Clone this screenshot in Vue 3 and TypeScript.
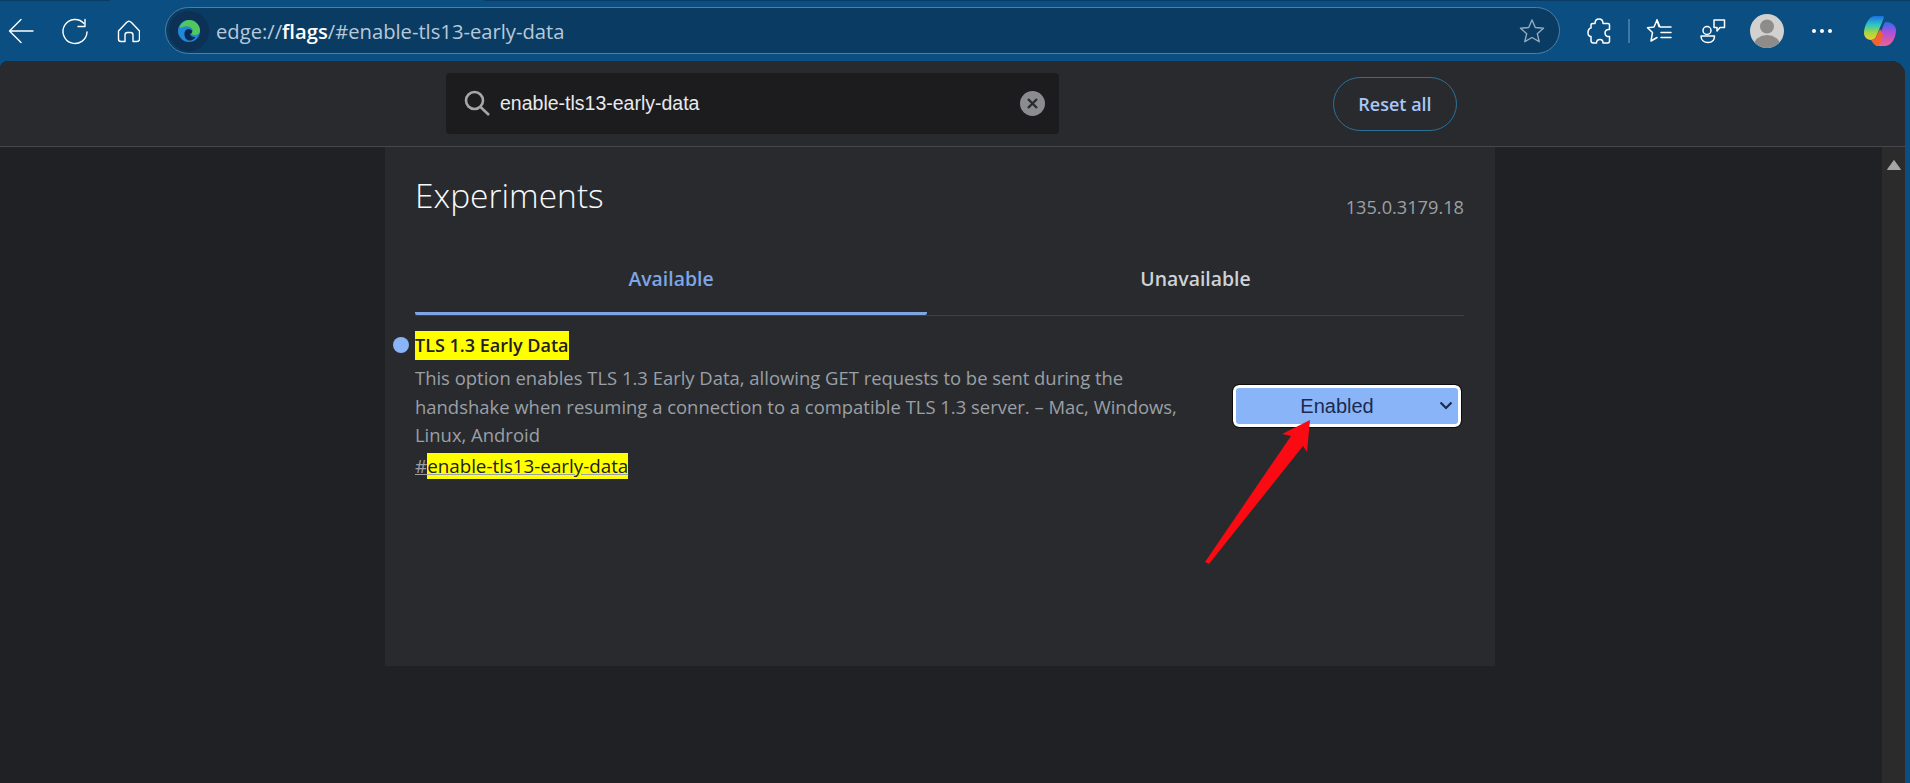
<template>
  <div class="browser">
    <header class="toolbar">
      <div class="nav-icons">
        <svg width="140" height="44" viewBox="0 0 140 44" fill="none" stroke="#fff" stroke-width="1.4" stroke-linecap="round" stroke-linejoin="round">
          <path d="M9.5 22H33M21 10.5 9.5 22 21 33.5"/>
          <path d="M84 14.5A12 12 0 1 0 87 23"/>
          <path d="M85 10.5V17.5H78"/>
          <path d="M118.5 22 126.5 13.5Q129 11 131.5 13.5L139.5 22V30Q139.5 32.5 137 32.5H133V26Q133 23.5 130.5 23.5H127.5Q125 23.5 125 26V32.5H121Q118.5 32.5 118.5 30Z"/>
        </svg>
      </div>
      <div class="omnibox">
        <span class="site-badge">
          <svg width="24" height="24" viewBox="0 0 24 24">
            <circle cx="12" cy="12" r="11" fill="#1f88d9"/>
            <path d="M2.5 8C5 2.5 10 1 12 1c6 0 11 5 11 10.5 0 3-2.5 4.5-5 4.5-2 0-4-1-4.5-2 2-.5 2.5-2 2-3.5C14.5 8 11 6.5 7.5 7.5 5.5 8 3.5 9.5 2.5 8z" fill="#52c75c"/>
            <path d="M9 11c2-2 5-1 6 .5.5 1.5 0 3-2 3.5.5 2 3 3.500 5.5 3-2 3-5 4-7 3.5-4-1-5.5-8-2.5-10.500z" fill="#0b2a4e"/>
          </svg>
        </span>
        <span class="url">edge://<b>flags</b>/#enable-tls13-early-data</span>
        <svg class="fav" width="26" height="26" viewBox="0 0 26 26" fill="none" stroke="#93abc0" stroke-width="1.4" stroke-linejoin="round">
          <path d="M13 2 16.3 9.5 24.5 10.3 18.3 15.7 20.2 23.7 13 19.5 5.8 23.7 7.7 15.7 1.5 10.3 9.7 9.5Z"/>
        </svg>
      </div>
      <div class="tools">
        <svg width="24" height="26" viewBox="0 0 24 26" fill="none" stroke="#fff" stroke-width="1.5" stroke-linejoin="round">
          <path d="M8 5.5C8 3 9.5 1 12 1s4 2 4 4.5H21C22 5.5 22.5 6 22.5 7V11.5C20 11 18 12.5 18 15s2 4 4.5 3.500V23c0 1-.5 2-2 2H16C16 22.5 14.5 21.5 13 21.5S9.5 22.5 9.5 25H6.5C5 25 4 24 4 22.5V18.5C1.5 18.5 1 16 1 14.5S2 10 4 10V7C4 6 5 5.5 6 5.5Z"/>
        </svg>
        <span class="divider"></span>
        <svg width="26" height="26" viewBox="0 0 26 26" fill="none" stroke="#fff" stroke-width="1.5" stroke-linejoin="round" stroke-linecap="round">
          <path d="M13 8.5 11 2 8 9 1.5 9.8 6.5 14.5 5 23 11 19.5"/>
          <path d="M11 2 14 9H25M15 14.5H25M15 19.5H25"/>
        </svg>
        <svg class="collab" width="26" height="26" viewBox="0 0 26 26" fill="none" stroke="#fff" stroke-width="1.5" stroke-linejoin="round">
          <circle cx="7" cy="12.5" r="4"/>
          <path d="M1 18H14.5C14.5 22 12 24.5 8 24.5S1 22 1 18Z"/>
          <path d="M14 2H24.5V9.5H20L17 13V9.5H14Z"/>
        </svg>
        <svg class="avatar" width="34" height="34" viewBox="0 0 34 34">
          <defs><clipPath id="av"><circle cx="17" cy="17" r="17"/></clipPath></defs>
          <circle cx="17" cy="17" r="17" fill="#d3d1cf"/>
          <circle cx="17" cy="12.5" r="7" fill="#8e8c8a"/>
          <ellipse cx="17" cy="31" rx="13" ry="10" fill="#8e8c8a" clip-path="url(#av)"/>
        </svg>
        <span class="dots"><i></i><i></i><i></i></span>
        <svg class="copilot" width="34" height="32" viewBox="0 0 34 32">
          <defs>
            <linearGradient id="cpA" x1="0" y1="0" x2="0" y2="1">
              <stop offset="0" stop-color="#1d6fe0"/>
              <stop offset=".35" stop-color="#2bc2c8"/>
              <stop offset=".7" stop-color="#a5d83f"/>
              <stop offset="1" stop-color="#f7c72f"/>
            </linearGradient>
            <linearGradient id="cpB" x1="0" y1="0" x2="0" y2="1">
              <stop offset="0" stop-color="#2a6fe6"/>
              <stop offset=".4" stop-color="#a94fe0"/>
              <stop offset="1" stop-color="#f2608f"/>
            </linearGradient>
          </defs>
          <path d="M11 1H20C21 1 21 3 20 5L13 22C12 24 10 25 8 25 4 25 1 22 1 18 1 12 5 2 11 1Z" fill="url(#cpA)"/>
          <path d="M23 7C29 7 33 11 33 15 33 22 29 31 22 31H14C12 31 13 29 14 27L21 9C21.5 8 22 7 23 7Z" fill="url(#cpB)"/>
          <path d="M8 25C10 25 12 24 13 22L17 14 20 20C19 26 16 31 14 31 11 30 10 28 8 25Z" fill="#f2622e"/>
        </svg>
      </div>
    </header>

    <div class="window">
      <div class="search-bar">
        <div class="search-box">
          <svg width="28" height="26" viewBox="0 0 28 26" fill="none" stroke="#a4a6a8" stroke-width="2.6">
            <circle cx="11.5" cy="10.5" r="8.5"/>
            <path d="M17.5 17 26 25"/>
          </svg>
          <span class="query">enable-tls13-early-data</span>
          <svg class="clear" width="25" height="25" viewBox="0 0 25 25">
            <circle cx="12.5" cy="12.5" r="12.5" fill="#8a8c8f"/>
            <path d="M8 8 17 17M17 8 8 17" stroke="#2a2b2e" stroke-width="2.4"/>
          </svg>
        </div>
        <button class="reset">Reset all</button>
      </div>

      <div class="page">
        <main class="scroller">
          <section class="panel">
            <div class="head">
              <h1>Experiments</h1>
              <span class="version">135.0.3179.18</span>
            </div>
            <div class="tabs">
              <div class="tab active">Available</div>
              <div class="tab">Unavailable</div>
            </div>
            <div class="flag">
              <span class="dot"></span>
              <div class="flag-text">
                <div class="flag-title"><mark>TLS 1.3 Early Data</mark></div>
                <p>This option enables TLS 1.3 Early Data, allowing GET requests to be sent during the handshake when resuming a connection to a compatible TLS 1.3 server. – Mac, Windows, Linux, Android</p>
                <a class="flag-link">#<mark>enable-tls13-early-data</mark></a>
              </div>
              <div class="select">
                <span>Enabled</span>
                <svg width="14" height="9" viewBox="0 0 14 9" fill="none" stroke="#1b2a4e" stroke-width="2.2">
                  <path d="M1.5 1.5 7 7 12.5 1.5"/>
                </svg>
              </div>
            </div>
          </section>
        </main>
        <aside class="scrollbar">
          <svg width="14" height="10" viewBox="0 0 14 10"><path d="M7 .5 13.5 9.5H.5Z" fill="#a6a6a6" stroke="#a6a6a6" stroke-linejoin="round"/></svg>
        </aside>
      </div>
    </div>

    <svg class="callout" width="120" height="160" viewBox="1200 412 120 160">
      <path d="M1310 420 1307 452 1303 446 1209 564 1205 562 1291 436 1282 434Z" fill="#fa0a12"/>
    </svg>
  </div>
</template>

<script setup lang="ts">
</script>

<style>
html, body {
  margin: 0;
  background: #0b4f82;
}
</style>

<style scoped>
.browser {
  position: relative;
  display: flex;
  flex-direction: column;
  width: 1910px;
  height: 783px;
  overflow: hidden;
  background: #0b4f82;
  font-family: "Open Sans", "Noto Sans", sans-serif;
}

.toolbar {
  flex: 0 0 61px;
  display: flex;
  align-items: center;
  height: 61px;
  box-sizing: border-box;
  padding-top: 1px;
  background: linear-gradient(to right, #0a3c66 110px, #0b4f82 110px, #0b4f82 484px, #0a3c66 484px) 0 0 / 100% 1px no-repeat;
}

.nav-icons {
  display: flex;
  width: 165px;
  flex: none;
}

.omnibox {
  flex: none;
  display: flex;
  align-items: center;
  width: 1395px;
  height: 47px;
  margin-top: -1px;
  box-sizing: border-box;
  border: 1px solid #4f7fa5;
  border-radius: 24px;
  background: #0a3c63;
  color: #b7c9d9;
}

.site-badge {
  display: flex;
  align-items: center;
  justify-content: center;
  width: 40px;
  height: 40px;
  margin-left: 3px;
  border-radius: 50%;
  background: #0c3154;
}

.url {
  margin-left: 7px;
  font-size: 20.2px;
}

.url b {
  color: #fff;
  font-weight: 600;
}

.fav {
  margin-left: auto;
  margin-right: 14px;
}

.tools {
  display: flex;
  align-items: center;
  flex: none;
  padding-left: 27px;
}

.divider {
  width: 2px;
  height: 24px;
  margin: 0 16px 0 17px;
  background: #3e79a6;
}

.collab {
  margin-left: 28px;
}

.avatar {
  margin-left: 24px;
}

.dots {
  display: flex;
  gap: 4px;
  margin-left: 28px;
}

.dots i {
  width: 4px;
  height: 4px;
  border-radius: 50%;
  background: #fff;
}

.copilot {
  margin-left: 31px;
}

.window {
  flex: 1;
  display: flex;
  flex-direction: column;
  min-height: 0;
  margin-right: 5px;
  border-radius: 8px 14px 0 0;
  overflow: hidden;
  background: #202124;
}

.search-bar {
  flex: 0 0 86px;
  display: flex;
  align-items: center;
  box-sizing: border-box;
  border-bottom: 1px solid #46474a;
  background: #292a2d;
}

.search-box {
  display: flex;
  align-items: center;
  width: 613px;
  height: 61px;
  margin-left: 446px;
  margin-top: -1px;
  box-sizing: border-box;
  padding: 0 14px 0 17px;
  border-radius: 4px;
  background: #1c1c1e;
}

.query {
  margin-left: 9px;
  font-family: "Liberation Sans", Arial, sans-serif;
  font-size: 19.5px;
  color: #e8eaed;
}

.clear {
  margin-left: auto;
}

.reset {
  width: 124px;
  height: 54px;
  margin-left: 274px;
  margin-top: 1px;
  padding: 0;
  border: 1px solid #2b7197;
  border-radius: 27px;
  background: transparent;
  color: #a8c7fa;
  font-family: inherit;
  font-size: 18px;
  font-weight: 600;
}

.page {
  flex: 1;
  display: flex;
  min-height: 0;
}

.scroller {
  flex: 1;
  min-width: 0;
}

.panel {
  width: 1110px;
  height: 519px;
  margin-left: 385px;
  box-sizing: border-box;
  padding: 0 31px 0 30px;
  background: #292a2d;
}

.head {
  display: flex;
  justify-content: space-between;
  height: 108px;
}

h1 {
  margin: 26px 0 0;
  font-size: 33.5px;
  line-height: 44px;
  font-weight: 300;
  color: #f8f9fa;
}

.version {
  margin-top: 46px;
  font-size: 18.2px;
  line-height: 28px;
  color: #9aa0a6;
}

.tabs {
  display: flex;
  height: 60px;
  border-bottom: 1px solid #3f4043;
}

.tab {
  flex: 0 0 537px;
  box-sizing: border-box;
  height: 60px;
  padding-top: 10px;
  text-align: center;
  font-size: 19.4px;
  line-height: 28px;
  font-weight: 600;
  color: #cfd2d6;
}

.tab.active {
  flex-basis: 512px;
  border-bottom: 3px solid #7ea6e6;
  border-radius: 0 0 2px 2px;
  color: #7ea6e6;
}

.flag {
  position: relative;
  display: flex;
  justify-content: space-between;
  margin-top: 15px;
}

.dot {
  position: absolute;
  left: -22px;
  top: 6px;
  width: 16px;
  height: 16px;
  border-radius: 50%;
  background: #8ab4f8;
}

.flag-text {
  width: 775px;
  font-size: 18.45px;
  line-height: 28.5px;
  color: #9aa0a6;
}

mark {
  background: #ffff00;
  color: #202124;
}

.flag-title {
  height: 33px;
  font-size: 18px;
  font-weight: 600;
  line-height: 29px;
}

.flag-title mark {
  display: inline-block;
  height: 29px;
}

p {
  margin: 0;
}

.flag-link {
  display: inline-block;
  font-size: 18.8px;
  text-decoration: underline;
  margin-top: 2px;
}

.select {
  position: relative;
  display: flex;
  align-items: center;
  justify-content: center;
  width: 228px;
  height: 42px;
  margin-top: 54px;
  margin-right: 3px;
  padding-right: 20px;
  box-sizing: border-box;
  border: 3px solid #fff;
  border-radius: 6px;
  outline: 1px solid #0d0d0d;
  background: #8ab4f8;
  color: #1b2a4e;
  font-family: "Liberation Sans", Arial, sans-serif;
  font-size: 20px;
}

.select svg {
  position: absolute;
  right: 5px;
  top: 13px;
}

.scrollbar {
  flex: 0 0 23px;
  display: flex;
  justify-content: center;
  padding-top: 13px;
  box-sizing: border-box;
  background: #2b2b2b;
}

.callout {
  position: absolute;
  left: 1200px;
  top: 412px;
}
</style>
